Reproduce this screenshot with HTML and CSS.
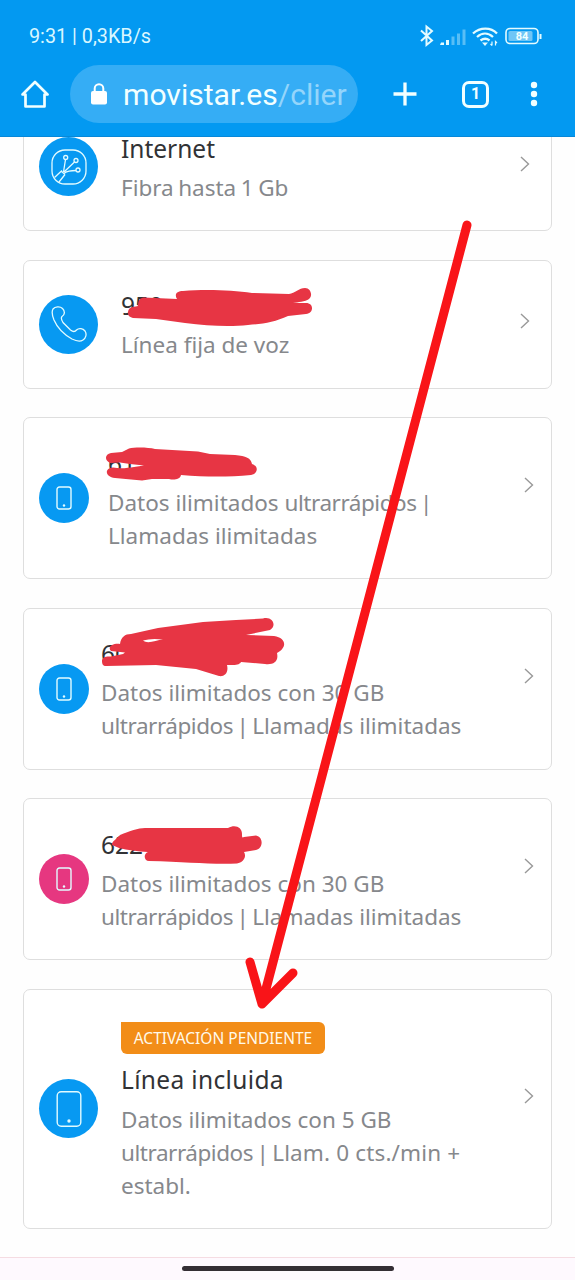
FILE: index.html
```html
<!DOCTYPE html>
<html lang="es">
<head>
<meta charset="utf-8">
<title>Movistar</title>
<link rel="stylesheet" href="styles.css">
</head>
<body>
<div class="screen">
  <header class="header">
    <div class="status">
      <span class="status-time">9:31 | 0,3KB/s</span>
      <svg class="status-icons" width="124" height="24" viewBox="0 0 124 24" fill="none" stroke="#e4fbff">
        <path d="M2 6.500L13 16.500L7.500 21V2.500L13 7L2 17" stroke-width="2"/>
        <g stroke="none" fill="#e4fbff">
          <path d="M22 18.500h3v2.500h-4z"/><path d="M27 16h3v5h-3z"/>
          <g opacity=".38"><path d="M32.500 12.500h3v8.500h-3zM38 9.500h3V21h-3zM43.500 5.500h3V21h-3z"/></g>
        </g>
        <path d="M54 9.500C61 3 72 3 78 9.500M58 13C63 8.500 69 8.500 74 13M61.500 16.500C65 14 67.500 14 70.500 16.500" stroke-width="2.300"/>
        <path d="M63 18.500H69L66 22z" fill="#e4fbff" stroke="none"/>
        <path d="M73 17.500v4M71.500 20l1.500 1.500M76.500 21.500v-4l1.500 1.500" stroke-width="1.200"/>
        <rect x="87" y="4.500" width="32" height="15" rx="4" stroke-width="1.600"/>
        <rect x="89.500" y="7" width="24" height="10" rx="1.500" fill="#6fc6f6" stroke="none"/>
        <path d="M121.500 10v5" stroke-width="2"/>
        <text class="battery" x="103" y="16" text-anchor="middle">84</text>
      </svg>
    </div>
    <div class="toolbar">
      <svg class="home" width="28" height="28" viewBox="0 0 28 28" fill="none" stroke="#f2ffff" stroke-width="2.700" stroke-linejoin="round"><path d="M1.500 14.500L14 2L26.500 14.500H23.500V26.500H4.500V14.500Z"/></svg>
      <div class="url">
        <svg width="16" height="22" viewBox="0 0 16 22"><rect y="8" width="16" height="13.500" rx="2" fill="#fff"/><path d="M3.700 9V5.500a4.300 4.300 0 0 1 8.600 0V9" fill="none" stroke="#fff" stroke-width="2"/></svg>
        <span class="url-text">movistar.es<span class="url-path">/clier</span></span>
      </div>
      <svg class="plus" width="24" height="24" viewBox="0 0 24 24" stroke="#f2ffff" stroke-width="3.300"><path d="M.5 12H23.500M12 .5V23.500"/></svg>
      <span class="tabs">1</span>
      <svg class="dots" width="8" height="26" viewBox="0 0 8 26" fill="#f2ffff"><circle cx="4" cy="4" r="3.200"/><circle cx="4" cy="13" r="3.200"/><circle cx="4" cy="22" r="3.200"/></svg>
    </div>
  </header>

  <main class="list">
    <article class="card">
      <span class="disc"><svg width="36" height="36" viewBox="0 0 36 36" fill="none" stroke="#e2fbff" stroke-width="1.300"><rect x="1" y="1" width="34" height="34" rx="13"/><path d="M3.500 28.500L11 21.500M8 33L14 25.500M10 22L14 25.500M12.500 23L14.500 10.500M13 23L23.500 13M13.500 24C17 21.500 20 21.500 25 21.500"/><circle cx="14.700" cy="8.500" r="2"/><circle cx="25" cy="11.500" r="2"/><circle cx="27" cy="21" r="2"/></svg></span>
      <div class="info"><h2 class="title">Internet</h2><p class="desc fiber">Fibra hasta 1 Gb</p></div>
      <svg class="chevron" width="10" height="16" viewBox="0 0 10 16"><path d="M1 1L8.500 8L1 15"/></svg>
    </article>
    <article class="card">
      <span class="disc"><svg width="36" height="36" viewBox="0 0 36 36" fill="none" stroke="#e2fbff" stroke-width="1.300"><path d="M2 3C4 .5 9 0 11.500 2.500C14.500 5.500 13.500 9 11 10.500C9.500 12 10.500 14 12 16.500L19.500 24C22 26 24 26 25.500 24C28 21.500 32 22.500 34 25C36 28 35 32 32 34C29 36 24 34.500 21 33C13 28.500 6 21 3 14C1 9 .5 5.500 2 3Z"/></svg></span>
      <div class="info"><h2 class="title">950</h2><p class="desc">Línea fija de voz</p></div>
      <svg class="chevron" width="10" height="16" viewBox="0 0 10 16"><path d="M1 1L8.500 8L1 15"/></svg>
    </article>
    <article class="card mobile first">
      <span class="disc small"><svg width="16" height="24" viewBox="0 0 16 24"><rect class="phone" x="1" y="1" width="14" height="22" rx="2.500"/><circle cx="8" cy="19.500" r="1.200" fill="#e2fbff"/></svg></span>
      <div class="info"><h2 class="title">61</h2><p class="desc">Datos ilimitados <span class="tight">ultrarrápidos</span> <span class="bar">|</span><br>Llamadas ilimitadas</p></div>
      <svg class="chevron" width="10" height="16" viewBox="0 0 10 16"><path d="M1 1L8.500 8L1 15"/></svg>
    </article>
    <article class="card mobile">
      <span class="disc small"><svg width="16" height="24" viewBox="0 0 16 24"><rect class="phone" x="1" y="1" width="14" height="22" rx="2.500"/><circle cx="8" cy="19.500" r="1.200" fill="#e2fbff"/></svg></span>
      <div class="info"><h2 class="title">60</h2><p class="desc">Datos ilimitados con 30 GB<br><span class="tight">ultrarrápidos</span> <span class="bar">|</span> Llamadas ilimitadas</p></div>
      <svg class="chevron" width="10" height="16" viewBox="0 0 10 16"><path d="M1 1L8.500 8L1 15"/></svg>
    </article>
    <article class="card mobile">
      <span class="disc small pink"><svg width="16" height="24" viewBox="0 0 16 24"><rect class="phone" x="1" y="1" width="14" height="22" rx="2.500"/><circle cx="8" cy="19.500" r="1.200" fill="#e2fbff"/></svg></span>
      <div class="info"><h2 class="title">622</h2><p class="desc">Datos ilimitados con 30 GB<br><span class="tight">ultrarrápidos</span> <span class="bar">|</span> Llamadas ilimitadas</p></div>
      <svg class="chevron" width="10" height="16" viewBox="0 0 10 16"><path d="M1 1L8.500 8L1 15"/></svg>
    </article>
    <article class="card included">
      <span class="disc"><svg width="26" height="36" viewBox="0 0 26 36"><rect class="phone" x="1.200" y=".7" width="23.600" height="34.600" rx="4"/><circle cx="13" cy="30" r="1.700" fill="#e2fbff"/></svg></span>
      <div class="info"><span class="badge">ACTIVACIÓN PENDIENTE</span><h2 class="title wide">Línea incluida</h2><p class="desc">Datos ilimitados con 5 GB<br><span class="tight">ultrarrápidos</span> <span class="bar">|</span> <span class="loose">Llam. 0 cts./min +</span><br>establ.</p></div>
      <svg class="chevron" width="10" height="16" viewBox="0 0 10 16"><path d="M1 1L8.500 8L1 15"/></svg>
    </article>
  </main>

  <footer class="navbar"><span class="pill"></span></footer>

  <svg class="marks" width="575" height="1280" viewBox="0 0 575 1280">
    <g fill="#e73544">
      <path d="M128 313C128 308 131 307 138 306C138 300 140 298 144 297.500L177 299C174 294 177 291 183 291C205 289 232 290 252 293L289 294C295 293 299 288 305 288C311 288 313 296 309 299C305 302 298 302 293 303L306 303C314 303 314 313 306 314L288 316C275 322 263 324 248 325C230 327 208 326 185 323L156 319L133 318C129 317 128 315 128 313Z"/>
      <path d="M110 463C104 460 105 454 111 453L122 452L129 448.500C134 447 148 447 155 449L198 451.500L210 454L235 455C246 456 251 458 252 464C259 466 258 474 251 475C228 477 207 477 181 475C180 480 173 480 169 479L152 479L142 480.500L115 478C105 477 104 468 113 467.500C120 469 128 468 134 467L144 465.500L130 464L120 462.500Z"/>
      <path fill-rule="evenodd" d="M102 661C102 657 106 656 111 656.500L123 654L125 652.500L111 651C107 647 113 643 120 644C121 637 125 634 131 634L158 628L203 622L236 620L263 618.500C273 616 277 626 270 630L246 635L274 636C287 638 287 648 277 653C279 662 273 665 265 664L241 662C239 666 231 665 227 665C229 673 224 677 219 676L196 669L156 665L106 666C103 666 102 664 102 661ZM143 640.500C148 644.500 156 640 163 639.500Q151 638 143 640.500Z"/>
      <path d="M112 845C111 842 117 839 120 835C130 831 138 828 145 828L197 828L228 828C235 824 242 827 242 834C242 837 242 838 244 837L256 835.500C264 837 263 849 256 850L244 852C247 857 243 863 237 863.500C211 864.500 187 862 149 861C144 861 143 854 148 852Q132 851 119 848Z"/>
    </g>
    <path d="M467 225L262 1004M250 962L262 1004L293 973" fill="none" stroke="#f91418" stroke-width="9" stroke-linecap="round" stroke-linejoin="round"/>
  </svg>
</div>
</body>
</html>
```
FILE: styles.css
```css
* { box-sizing: border-box; }
body { margin: 0; }
.screen {
  position: relative;
  display: flex;
  flex-direction: column;
  width: 575px;
  height: 1280px;
  overflow: hidden;
  background: #fefefe;
  font-family: "Noto Sans", sans-serif;
}
.header {
  flex: none;
  height: 137px;
  padding-top: 23px;
  background: #0399f1;
  border-bottom: 1px solid #0788d8;
  font-family: Roboto, sans-serif;
}
.status {
  display: flex;
  align-items: center;
  justify-content: space-between;
  height: 26px;
  padding: 0 32px 0 29px;
}
.status-time { color: #d9f7ff; font-size: 19.8px; white-space: nowrap; }
.battery { fill: #f0ffff; stroke: none; font: 700 11px Roboto, sans-serif; }
.toolbar { display: flex; align-items: center; height: 58px; margin-top: 16px; padding-left: 21px; }
.url {
  display: flex;
  align-items: center;
  gap: 16px;
  width: 288px;
  height: 58px;
  margin-left: 21px;
  padding-left: 21px;
  border-radius: 29px;
  background: #35adf5;
}
.url-text { color: #f2ffff; font-size: 30.1px; line-height: 36px; white-space: nowrap; padding-top: 2px; }
.url-path { color: #94d5fb; }
.plus { margin-left: 35px; }
.tabs {
  display: grid;
  place-items: center;
  width: 27px;
  height: 27px;
  margin-left: 45px;
  border: 3px solid #f2ffff;
  border-radius: 7px;
  color: #f2ffff;
  font-size: 16px;
  font-weight: 700;
  line-height: 1;
}
.dots { margin-left: 41px; }
.list {
  flex: 1;
  min-height: 0;
  display: flex;
  flex-direction: column;
  gap: 28.5px;
  padding: 0 23px;
  overflow: hidden;
}
.card {
  flex: none;
  display: flex;
  align-items: center;
  height: 129px;
  padding: 0 21px 0 15px;
  border: 1.5px solid #dedede;
  border-radius: 7px;
  background: #fff;
}
.card:first-child { margin-top: -35px; }
.mobile { height: 162px; padding-right: 17px; }
.included { height: 240px; padding-right: 17px; }
.disc {
  flex: none;
  display: grid;
  place-items: center;
  width: 59px;
  height: 59px;
  border-radius: 50%;
  background: #0799f2;
}
.small { width: 50px; height: 50px; }
.pink { background: #e63780; }
.phone { fill: none; stroke: #e2fbff; stroke-width: 1.4; }
.info { flex: 1; align-self: flex-start; margin-left: 23px; padding-top: 26.5px; white-space: nowrap; }
.mobile .info { margin-left: 12px; }
.first .info { margin-left: 19px; }
.included .info { padding-top: 32.5px; }
.title { margin: 0 0 3px; color: #313235; font-size: 24.5px; font-weight: 400; line-height: 38px; }
.wide { letter-spacing: .35px; }
.desc { margin: 0; color: #86888c; font-size: 22.5px; line-height: 33px; }
.fiber { letter-spacing: -.05px; word-spacing: -1.1px; }
.tight { letter-spacing: -.45px; }
.loose { letter-spacing: .15px; }
.bar { margin: 0 -2.5px; }
.badge {
  display: flex;
  align-items: center;
  justify-content: center;
  width: 204px;
  height: 32px;
  margin-bottom: 7px;
  border-radius: 0 6px 6px 6px;
  background: #f28d18;
  color: #fff9ea;
  font-size: 15.5px;
}
.included .desc { padding-top: .5px; }
.chevron { flex: none; margin-bottom: 6px; fill: none; stroke: #999; stroke-width: 1.4; }
.mobile .chevron, .included .chevron { margin-bottom: 26px; }
.navbar {
  flex: none;
  display: flex;
  justify-content: center;
  height: 23px;
  padding-top: 8px;
  border-top: 1px solid #f5dce2;
  background: #fef9fe;
}
.pill { width: 212px; height: 5px; border-radius: 3px; background: #342e34; }
.marks { position: absolute; inset: 0; }
```
